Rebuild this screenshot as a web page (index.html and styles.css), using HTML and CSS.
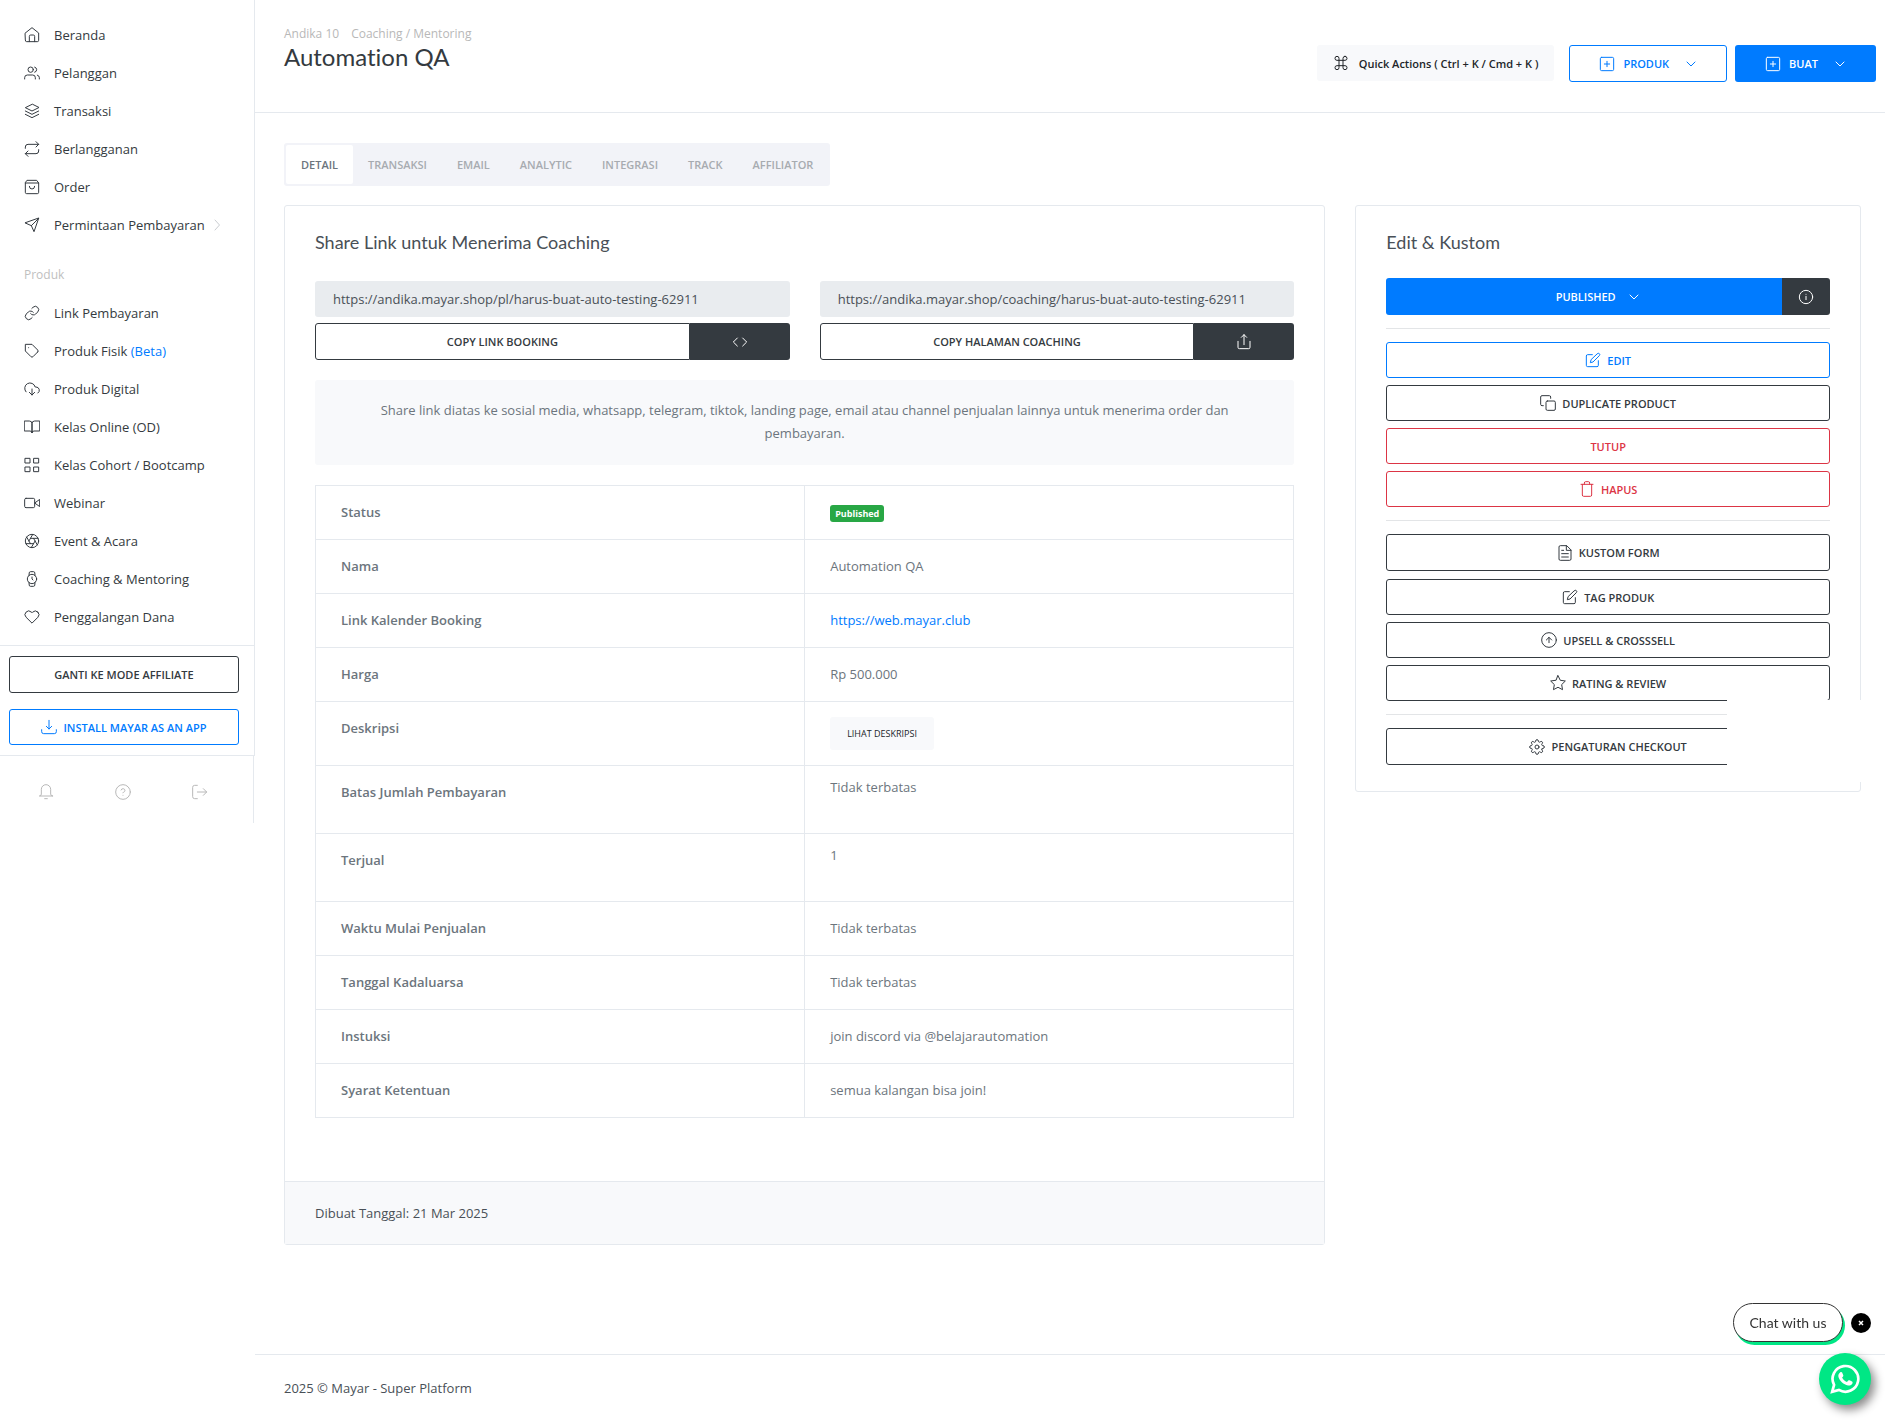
FILE: index.html
```html
<!DOCTYPE html>
<html lang="id">
<head>
  <meta charset="UTF-8" />
  <meta name="viewport" content="width=device-width, initial-scale=1.0" />
  <title>Automation QA - Mayar</title>
  <link rel="stylesheet" href="styles.css">
</head>
<body>
  <!-- icon sprite -->
  <svg class="sprite" xmlns="http://www.w3.org/2000/svg">
    <symbol id="home" viewBox="0 0 24 24"><path d="M2 9l10-8 10 8v11a2 2 0 0 1-2 2H4a2 2 0 0 1-2-2z"/><path d="M8 22v-8a2 2 0 0 1 2-2h4a2 2 0 0 1 2 2v8"/></symbol>
    <symbol id="users" viewBox="0 0 24 24"><path d="M17 21v-2a4 4 0 0 0-4-4H5a4 4 0 0 0-4 4v2"/><circle cx="10" cy="7" r="4"/><path d="M23 21v-2a4 4 0 0 0-3-3.870"/><path d="M16 3.130a4 4 0 0 1 0 7.750"/></symbol>
    <symbol id="layers" viewBox="0 0 24 24"><path d="M12 2L2 7l10 5 10-5z"/><path d="M2 17l10 5 10-5"/><path d="M2 12l10 5 10-5"/></symbol>
    <symbol id="repeat" viewBox="0 0 24 24"><path d="M18 1l4 4-4 4"/><path d="M2 11V9a4 4 0 0 1 4-4h16"/><path d="M6 23l-4-4 4-4"/><path d="M22 13v2a4 4 0 0 1-4 4H2"/></symbol>
    <symbol id="bag" viewBox="0 0 24 24"><path d="M5 2h14l3 4v14a2 2 0 0 1-2 2H4a2 2 0 0 1-2-2V6z"/><path d="M2 6h20"/><path d="M16 11a4 4 0 0 1-8 0"/></symbol>
    <symbol id="send" viewBox="0 0 24 24"><path d="M22 2L11 13"/><path d="M22 2l-7 20-4-9-9-4z"/></symbol>
    <symbol id="link" viewBox="0 0 24 24"><path d="M10 13a5 5 0 0 0 7.540.540l3-3a5 5 0 0 0-7.070-7.070l-1.720 1.710"/><path d="M14 11a5 5 0 0 0-7.540-.540l-3 3a5 5 0 0 0 7.070 7.070l1.710-1.710"/></symbol>
    <symbol id="tag" viewBox="0 0 24 24"><path d="M20.590 13.410l-7.170 7.170a2 2 0 0 1-2.830 0L2 12V2h10l8.590 8.590a2 2 0 0 1 0 2.820z"/><path d="M7 7h.01"/></symbol>
    <symbol id="cloud" viewBox="0 0 24 24"><path d="M8 17l4 4 4-4"/><path d="M12 12v9"/><path d="M20.880 18.090A5 5 0 0 0 18 9h-1.260A8 8 0 1 0 3 16.290"/></symbol>
    <symbol id="book" viewBox="0 0 24 24"><path d="M1 3h7a4 4 0 0 1 4 4v14a3 3 0 0 0-3-3H1z"/><path d="M23 3h-7a4 4 0 0 0-4 4v14a3 3 0 0 1 3-3h8z"/></symbol>
    <symbol id="grid" viewBox="0 0 24 24"><path d="M2 2h7v7H2zM15 2h7v7h-7zM15 15h7v7h-7zM2 15h7v7H2z"/></symbol>
    <symbol id="video" viewBox="0 0 24 24"><path d="M23 7l-7 5 7 5z"/><rect x="1" y="5" width="15" height="14" rx="2"/></symbol>
    <symbol id="aperture" viewBox="0 0 24 24"><circle cx="12" cy="12" r="10"/><path d="M14.310 8l5.740 9.940M9.690 8h11.480M7.380 12l5.740-9.940M9.690 16L3.950 6.060M14.310 16H2.830M16.620 12l-5.740 9.940"/></symbol>
    <symbol id="watch" viewBox="0 0 24 24"><circle cx="12" cy="12" r="7"/><path d="M12 9v3l1.500 1.500"/><path d="M16.510 17.350l-.350 3.830a2 2 0 0 1-2 1.820H9.830a2 2 0 0 1-2-1.820l-.350-3.830m.010-10.700l.350-3.830A2 2 0 0 1 9.830 1h4.350a2 2 0 0 1 2 1.820l.350 3.830"/></symbol>
    <symbol id="heart" viewBox="0 0 24 24"><path d="M20.840 4.610a5.500 5.500 0 0 0-7.780 0L12 5.670l-1.060-1.060a5.500 5.500 0 0 0-7.780 7.780L12 21.230l8.840-8.840a5.500 5.500 0 0 0 0-7.780z"/></symbol>
    <symbol id="download" viewBox="0 0 24 24"><path d="M1 16v3a3 3 0 0 0 3 3h16a3 3 0 0 0 3-3v-3"/><path d="M8 11l4 4 4-4"/><path d="M12 15V2"/></symbol>
    <symbol id="bell" viewBox="0 0 24 24"><path d="M22 18H2a3 3 0 0 0 3-3V8a7 7 0 0 1 14 0v7a3 3 0 0 0 3 3z"/><path d="M10 22h4"/></symbol>
    <symbol id="help" viewBox="0 0 24 24"><circle cx="12" cy="12" r="11"/><path d="M9.090 9a3 3 0 0 1 5.830 1c0 2-3 3-3 3"/><path d="M12 17h.01"/></symbol>
    <symbol id="logout" viewBox="0 0 24 24"><path d="M8 2H4a3 3 0 0 0-3 3v14a3 3 0 0 0 3 3h4"/><path d="M17 7l5 5-5 5"/><path d="M22 12H8"/></symbol>
    <symbol id="command" viewBox="0 0 24 24"><path d="M18 2a3 3 0 0 0-3 3v14a3 3 0 1 0 3-3H6a3 3 0 1 0 3 3V5a3 3 0 1 0-3 3h12a3 3 0 0 0 0-6z"/></symbol>
    <symbol id="plus" viewBox="0 0 24 24"><rect x="2" y="2" width="20" height="20" rx="2"/><path d="M12 8v8M8 12h8"/></symbol>
    <symbol id="down" viewBox="0 0 24 24"><path d="M4 8l8 8 8-8"/></symbol>
    <symbol id="right" viewBox="0 0 24 24"><path d="M8 2l9 10-9 10"/></symbol>
    <symbol id="code" viewBox="0 0 24 24"><path d="M16 18l6-6-6-6M8 6l-6 6 6 6"/></symbol>
    <symbol id="share" viewBox="0 0 24 24"><path d="M3 11v9a2 2 0 0 0 2 2h14a2 2 0 0 0 2-2v-9"/><path d="M16 5l-4-4-4 4"/><path d="M12 1v15"/></symbol>
    <symbol id="info" viewBox="0 0 24 24"><circle cx="12" cy="12" r="10"/><path d="M12 16v-5M12 8h.01"/></symbol>
    <symbol id="edit" viewBox="0 0 24 24"><path d="M11 4H4a2 2 0 0 0-2 2v14a2 2 0 0 0 2 2h14a2 2 0 0 0 2-2v-7"/><path d="M18.500 2.500a2.120 2.120 0 0 1 3 3L12 15l-4 1 1-4z"/></symbol>
    <symbol id="copy" viewBox="0 0 24 24"><rect x="9" y="9" width="14" height="14" rx="2"/><path d="M5 16H3a2 2 0 0 1-2-2V3a2 2 0 0 1 2-2h11a2 2 0 0 1 2 2v2"/></symbol>
    <symbol id="trash" viewBox="0 0 24 24"><path d="M3 5h18"/><path d="M19 5v16a2 2 0 0 1-2 2H7a2 2 0 0 1-2-2V5m3 0V3a2 2 0 0 1 2-2h4a2 2 0 0 1 2 2v2"/></symbol>
    <symbol id="file" viewBox="0 0 24 24"><path d="M14 1H5a2 2 0 0 0-2 2v18a2 2 0 0 0 2 2h14a2 2 0 0 0 2-2V8z"/><path d="M14 1v7h7M17 13H7M17 18H7M10 8H7"/></symbol>
    <symbol id="up" viewBox="0 0 24 24"><circle cx="12" cy="12" r="11"/><path d="M16 12l-4-4-4 4M12 16V8"/></symbol>
    <symbol id="star" viewBox="0 0 24 24"><path d="M12 1l3.400 6.900 7.600 1.100-5.500 5.400 1.300 7.600L12 18.400 5.200 22l1.300-7.600L1 9l7.600-1.100z"/></symbol>
    <symbol id="settings" viewBox="0 0 24 24"><circle cx="12" cy="12" r="3"/><path d="M19.400 15a1.650 1.650 0 0 0 .330 1.820l.060.060a2 2 0 1 1-2.830 2.830l-.060-.060a1.650 1.650 0 0 0-2.800 1.170V21a2 2 0 0 1-4 0v-.090A1.650 1.650 0 0 0 7.200 19.700l-.060.060a2 2 0 1 1-2.830-2.830l.060-.060A1.650 1.650 0 0 0 3.090 14H3a2 2 0 0 1 0-4h.090A1.650 1.650 0 0 0 4.300 7.200l-.060-.060a2 2 0 1 1 2.830-2.830l.060.060A1.650 1.650 0 0 0 10 3.090V3a2 2 0 0 1 4 0v.090a1.650 1.650 0 0 0 2.800 1.210l.060-.060a2 2 0 1 1 2.830 2.830l-.060.060A1.650 1.650 0 0 0 20.910 10H21a2 2 0 0 1 0 4h-.090a1.650 1.650 0 0 0-1.510 1z"/></symbol>
  </svg>

  <div class="layout">
    <aside class="sidebar">
      <div class="sidebar-main">
        <nav class="menu">
          <a href="#"><svg class="icon"><use href="#home"/></svg>Beranda</a>
          <a href="#"><svg class="icon"><use href="#users"/></svg>Pelanggan</a>
          <a href="#"><svg class="icon"><use href="#layers"/></svg>Transaksi</a>
          <a href="#"><svg class="icon"><use href="#repeat"/></svg>Berlangganan</a>
          <a href="#"><svg class="icon"><use href="#bag"/></svg>Order</a>
          <a href="#"><svg class="icon"><use href="#send"/></svg>Permintaan Pembayaran<svg class="icon arrow"><use href="#right"/></svg></a>
          <h6>Produk</h6>
          <a href="#"><svg class="icon"><use href="#link"/></svg>Link Pembayaran</a>
          <a href="#"><svg class="icon"><use href="#tag"/></svg><span>Produk Fisik <span class="beta">(Beta)</span></span></a>
          <a href="#"><svg class="icon"><use href="#cloud"/></svg>Produk Digital</a>
          <a href="#"><svg class="icon"><use href="#book"/></svg>Kelas Online (OD)</a>
          <a href="#"><svg class="icon"><use href="#grid"/></svg>Kelas Cohort / Bootcamp</a>
          <a href="#"><svg class="icon"><use href="#video"/></svg>Webinar</a>
          <a href="#"><svg class="icon"><use href="#aperture"/></svg>Event &amp; Acara</a>
          <a href="#"><svg class="icon"><use href="#watch"/></svg>Coaching &amp; Mentoring</a>
          <a href="#"><svg class="icon"><use href="#heart"/></svg>Penggalangan Dana</a>
        </nav>
        <div class="sidebar-actions">
          <button class="btn btn-tall btn-dark-outline">GANTI KE MODE AFFILIATE</button>
          <button class="btn btn-blue-outline"><svg class="icon"><use href="#download"/></svg>INSTALL MAYAR AS AN APP</button>
        </div>
      </div>
      <div class="sidebar-footer">
        <a href="#" aria-label="Notifikasi"><svg class="icon"><use href="#bell"/></svg></a>
        <a href="#" aria-label="Bantuan"><svg class="icon"><use href="#help"/></svg></a>
        <a href="#" aria-label="Keluar"><svg class="icon"><use href="#logout"/></svg></a>
      </div>
    </aside>

    <div class="page">
      <header class="header">
        <div>
          <div class="breadcrumb"><a href="#">Andika 10</a><a href="#">Coaching / Mentoring</a></div>
          <h1>Automation QA</h1>
        </div>
        <div class="header-actions">
          <button class="btn btn-light"><svg class="icon"><use href="#command"/></svg>Quick Actions ( Ctrl + K / Cmd + K )</button>
          <button class="btn btn-tall btn-blue-outline btn-drop"><svg class="icon"><use href="#plus"/></svg>PRODUK<svg class="icon chevron"><use href="#down"/></svg></button>
          <button class="btn btn-tall btn-blue btn-drop"><svg class="icon"><use href="#plus"/></svg>BUAT<svg class="icon chevron"><use href="#down"/></svg></button>
        </div>
      </header>

      <main class="content">
        <nav class="tabs">
          <a href="#" class="active">DETAIL</a>
          <a href="#">TRANSAKSI</a>
          <a href="#">EMAIL</a>
          <a href="#">ANALYTIC</a>
          <a href="#">INTEGRASI</a>
          <a href="#">TRACK</a>
          <a href="#">AFFILIATOR</a>
        </nav>

        <div class="row">
          <div class="col">
            <section class="card">
              <div class="card-body">
                <h2>Share Link untuk Menerima Coaching</h2>
                <div class="share">
                  <div>
                    <input type="text" aria-label="Link booking" value="https://andika.mayar.shop/pl/harus-buat-auto-testing-62911" readonly>
                    <div class="btn-group">
                      <button class="btn btn-tall btn-dark-outline">COPY LINK BOOKING</button>
                      <button class="btn btn-tall btn-dark" aria-label="Embed"><svg class="icon"><use href="#code"/></svg></button>
                    </div>
                  </div>
                  <div>
                    <input type="text" aria-label="Halaman coaching" value="https://andika.mayar.shop/coaching/harus-buat-auto-testing-62911" readonly>
                    <div class="btn-group">
                      <button class="btn btn-tall btn-dark-outline">COPY HALAMAN COACHING</button>
                      <button class="btn btn-tall btn-dark" aria-label="Share"><svg class="icon"><use href="#share"/></svg></button>
                    </div>
                  </div>
                </div>
                <p class="notice">Share link diatas ke sosial media, whatsapp, telegram, tiktok, landing page, email atau channel penjualan lainnya untuk menerima order dan pembayaran.</p>
                <table class="detail">
                  <tr><th>Status</th><td><span class="badge">Published</span></td></tr>
                  <tr><th>Nama</th><td>Automation QA</td></tr>
                  <tr><th>Link Kalender Booking</th><td><a href="#">https://web.mayar.club</a></td></tr>
                  <tr><th>Harga</th><td>Rp 500.000</td></tr>
                  <tr><th>Deskripsi</th><td><button class="btn btn-light btn-small">LIHAT DESKRIPSI</button></td></tr>
                  <tr class="tall"><th>Batas Jumlah Pembayaran</th><td><p>Tidak terbatas</p></td></tr>
                  <tr class="tall"><th>Terjual</th><td><p>1</p></td></tr>
                  <tr><th>Waktu Mulai Penjualan</th><td>Tidak terbatas</td></tr>
                  <tr><th>Tanggal Kadaluarsa</th><td>Tidak terbatas</td></tr>
                  <tr><th>Instuksi</th><td>join discord via @belajarautomation</td></tr>
                  <tr><th>Syarat Ketentuan</th><td>semua kalangan bisa join!</td></tr>
                </table>
              </div>
              <div class="card-footer">Dibuat Tanggal: 21 Mar 2025</div>
            </section>
          </div>

          <div class="col">
            <section class="card side">
              <h2>Edit &amp; Kustom</h2>
              <div class="btn-group publish">
                <button class="btn btn-tall btn-blue">PUBLISHED<svg class="icon chevron"><use href="#down"/></svg></button>
                <button class="btn btn-tall btn-dark" aria-label="Info"><svg class="icon"><use href="#info"/></svg></button>
              </div>
              <hr>
              <div class="stack">
                <button class="btn btn-blue-outline"><svg class="icon"><use href="#edit"/></svg>EDIT</button>
                <button class="btn btn-dark-outline"><svg class="icon"><use href="#copy"/></svg>DUPLICATE PRODUCT</button>
                <button class="btn btn-red-outline">TUTUP</button>
                <button class="btn btn-red-outline"><svg class="icon"><use href="#trash"/></svg>HAPUS</button>
              </div>
              <hr>
              <div class="stack">
                <button class="btn btn-tall btn-dark-outline"><svg class="icon"><use href="#file"/></svg>KUSTOM FORM</button>
                <button class="btn btn-dark-outline"><svg class="icon"><use href="#edit"/></svg>TAG PRODUK</button>
                <button class="btn btn-dark-outline"><svg class="icon"><use href="#up"/></svg>UPSELL &amp; CROSSSELL</button>
                <button class="btn btn-dark-outline"><svg class="icon"><use href="#star"/></svg>RATING &amp; REVIEW</button>
              </div>
              <hr>
              <div class="stack">
                <button class="btn btn-tall btn-dark-outline"><svg class="icon"><use href="#settings"/></svg>PENGATURAN CHECKOUT</button>
              </div>
              <div class="widget-frame"></div>
            </section>
          </div>
        </div>
      </main>

      <footer class="footer">2025 © Mayar - Super Platform</footer>
    </div>
  </div>

  <div class="chat">
    <div class="chat-row">
      <button class="chat-bubble">Chat with us</button>
      <button class="chat-close" aria-label="Tutup"><svg viewBox="0 0 20 20"><path d="M8 8l4 4M12 8l-4 4"/></svg></button>
    </div>
    <a href="#" class="whatsapp" aria-label="WhatsApp">
      <svg viewBox="0 0 28 28"><path class="ring" d="M2 26l1.800-6.500A12 12 0 1 1 8.300 24.200z"/><path class="phone" d="M9.600 7.800c.500-.500 1.400-.500 1.700.200l1.100 2.500c.200.500 0 .900-.400 1.400l-.700.800c1 2 2.500 3.300 4.500 4.200l1.300-1.500c.300-.400.700-.400 1.100-.200l2.400 1.200c.700.400.600 1.200.200 2-.700 1.400-2.500 2-4 1.600-4.200-1-7.600-4-8.900-7.900-.500-1.600.400-3.300 1.700-4.300z"/></svg>
    </a>
  </div>
</body>
</html>
```
FILE: styles.css
```css
* {
  box-sizing: border-box;
}
body {
  margin: 0;
  background: #fff;
  color: #495057;
  font-family: 'Open Sans', sans-serif;
  font-size: 13px;
  line-height: 23px;
}
a {
  color: #007bff;
  text-decoration: none;
}
h1, h2, h6 {
  margin: 0;
  font-weight: 400;
}
h1, h2, .chat-bubble {
  font-family: Lato, sans-serif;
  font-variant-ligatures: none;
}
.sprite {
  display: none;
}
.icon {
  width: 16px;
  height: 16px;
  flex: none;
  fill: none;
  stroke: currentColor;
  stroke-width: 1.5;
  stroke-linecap: round;
  stroke-linejoin: round;
}
.layout {
  display: flex;
  min-height: 100vh;
}

/* sidebar */
.sidebar {
  width: 255px;
  flex: none;
}
.sidebar-main {
  border-right: 1px solid #e5e9ee;
}
.menu {
  padding: 16px 0 9px;
}
.menu a {
  display: flex;
  align-items: center;
  gap: 14px;
  height: 38px;
  padding-left: 24px;
  color: #343a40;
}
.menu .arrow {
  width: 12px;
  height: 12px;
  margin-left: -8px;
  color: #b8bcc2;
}
.menu h6 {
  padding: 12px 0 0 24px;
  font-size: 12px;
  line-height: 38px;
  color: #c0c0c0;
}
.beta {
  color: #007bff;
}
.sidebar-actions {
  display: flex;
  flex-direction: column;
  gap: 16px;
  padding: 10px 15px 10px 9px;
  border-top: 1px solid #e5e9ee;
  border-bottom: 1px solid #e5e9ee;
}
.sidebar-footer {
  display: flex;
  align-items: center;
  justify-content: space-between;
  width: 254px;
  height: 67px;
  padding: 4px 45px 0 38px;
  border-right: 1px solid #e5e9ee;
}
.sidebar-footer a {
  display: flex;
  color: #b8b8b8;
}

/* buttons */
.btn {
  display: flex;
  align-items: center;
  justify-content: center;
  gap: 6px;
  height: 36px;
  padding: 0 15px;
  border: 1px solid transparent;
  border-radius: 3px;
  background: #fff;
  font-family: inherit;
  font-size: 11px;
  font-weight: 600;
  cursor: pointer;
}
.btn-tall {
  height: 37px;
}
.btn-dark-outline {
  border-color: #343a40;
  color: #343a40;
}
.btn-blue-outline {
  border-color: #007bff;
  color: #007bff;
}
.btn-red-outline {
  border-color: #dc3545;
  color: #dc3545;
}
.btn-blue {
  background: #007bff;
  color: #fff;
}
.btn-dark {
  background: #343a40;
  color: #fff;
}
.btn-light {
  background: #f8f9fb;
  color: #212529;
}
.btn-small {
  height: 33px;
  padding: 0 16px;
  font-size: 9px;
  font-weight: 400;
}
.btn-group {
  display: flex;
}
.btn-group .btn:first-child {
  flex: 1;
  border-radius: 3px 0 0 3px;
}
.btn-group .btn:last-child {
  width: 100px;
  border-radius: 0 3px 3px 0;
}
.chevron {
  width: 12px;
  height: 12px;
  stroke-width: 2;
}

/* header */
.page {
  flex: 1;
  display: flex;
  flex-direction: column;
}
.header {
  display: flex;
  justify-content: space-between;
  height: 113px;
  padding: 22px 9px 0 29px;
  border-bottom: 1px solid #e5e9ee;
}
.breadcrumb {
  display: flex;
  gap: 12px;
  font-size: 12px;
}
.breadcrumb a {
  color: #b8b8b8;
}
h1 {
  font-size: 24px;
  line-height: 24px;
  color: #343a40;
}
.header-actions {
  display: flex;
  align-items: flex-start;
  gap: 8px;
  padding-top: 23px;
}
.header-actions .btn-light {
  gap: 10px;
  margin-right: 7px;
}
.btn-drop {
  padding: 0 29px;
  gap: 8px;
}
.btn-drop .chevron {
  margin-left: 8px;
}

/* content */
.content {
  flex: 1;
  padding: 30px 9px 30px 14px;
}
.tabs {
  display: inline-flex;
  margin-left: 15px;
  padding: 2px;
  border-radius: 3px;
  background: #f2f3f8;
}
.tabs a {
  padding: 0 15px;
  border-radius: 2px;
  font-size: 11px;
  font-weight: 600;
  line-height: 39px;
  color: #a7abb0;
}
.tabs .active {
  background: #fff;
  color: #6c757d;
}
.row {
  display: grid;
  grid-template-columns: 2fr 1fr;
  align-items: start;
  margin-top: 19px;
}
.col {
  min-width: 0;
  padding: 0 15px;
}
.card {
  position: relative;
  border: 1px solid #e5e9ee;
  border-radius: 3px;
}
.card-body {
  padding: 24px 30px 63px;
}
h2 {
  margin-bottom: 27px;
  font-size: 18px;
  line-height: 24px;
  color: #495057;
}
.share {
  display: grid;
  grid-template-columns: 1fr 1fr;
  gap: 30px;
}
.share input {
  display: block;
  width: 100%;
  height: 36px;
  margin-bottom: 6px;
  padding: 0 18px;
  border: none;
  border-radius: 3px;
  background: #e9ecef;
  color: #495057;
  font-family: inherit;
  font-size: 13px;
}
.notice {
  margin: 20px 0;
  padding: 19px 60px 20px;
  border-radius: 3px;
  background: #f8f9fb;
  color: #6c757d;
  text-align: center;
}
.detail {
  width: 100%;
  border-collapse: collapse;
  table-layout: fixed;
  color: #6c757d;
}
.detail th,
.detail td {
  padding: 15px 25px;
  border: 1px solid #e5e9ee;
  text-align: left;
  vertical-align: top;
}
.detail th {
  font-weight: 600;
}
.detail .tall td {
  padding: 10px 25px;
}
.detail p {
  margin: 0 0 24px;
}
.badge {
  display: inline-block;
  padding: 0 5px;
  border-radius: 3px;
  background: #28a745;
  color: #fff;
  font-size: 9px;
  font-weight: 700;
  line-height: 17px;
}
.card-footer {
  padding: 20px 30px 19px;
  border-top: 1px solid #e5e9ee;
  background: #f8f9fb;
}
.side {
  padding: 24px 30px 25px;
}
.side h2 {
  margin-bottom: 24px;
}
.side hr {
  margin: 13px 0;
  border: none;
  border-top: 1px solid #e3e5e7;
}
.publish .btn:first-child {
  gap: 12px;
  padding-left: 42px;
}
.publish .btn:last-child {
  width: 48px;
}
.stack {
  display: grid;
  gap: 7px;
}
.stack .btn-tall {
  margin-bottom: 1px;
}
/* blank frame of the chat widget, lies over the card */
.widget-frame {
  position: absolute;
  right: -8px;
  bottom: 9px;
  width: 141px;
  height: 82px;
  background: #fff;
}
.footer {
  height: 68px;
  padding: 22px 29px;
  border-top: 1px solid #e5e9ee;
}

/* chat */
.chat {
  position: fixed;
  right: 14px;
  bottom: 17px;
  display: flex;
  flex-direction: column;
  align-items: flex-end;
  gap: 11px;
}
.chat-row {
  display: flex;
  align-items: center;
  gap: 8px;
}
.chat-bubble {
  width: 110px;
  height: 39px;
  border: 1px solid #333;
  border-radius: 20px;
  background: #fff;
  box-shadow: 2px 3px 0 #00e785;
  color: #333;
  font-size: 14px;
}
.chat-close {
  width: 20px;
  height: 20px;
  padding: 0;
  border: none;
  border-radius: 50%;
  background: #000;
}
.chat-close svg {
  display: block;
  stroke: #fff;
  stroke-width: 1.5;
}
.whatsapp {
  display: flex;
  align-items: center;
  justify-content: center;
  width: 52px;
  height: 52px;
  border-radius: 50%;
  background: #00e785;
  box-shadow: 4px 5px 10px rgba(0, 0, 0, 0.45);
}
.whatsapp svg {
  width: 30px;
  height: 30px;
}
.ring {
  fill: none;
  stroke: #fff;
  stroke-width: 2.5;
}
.phone {
  fill: #fff;
}
```
